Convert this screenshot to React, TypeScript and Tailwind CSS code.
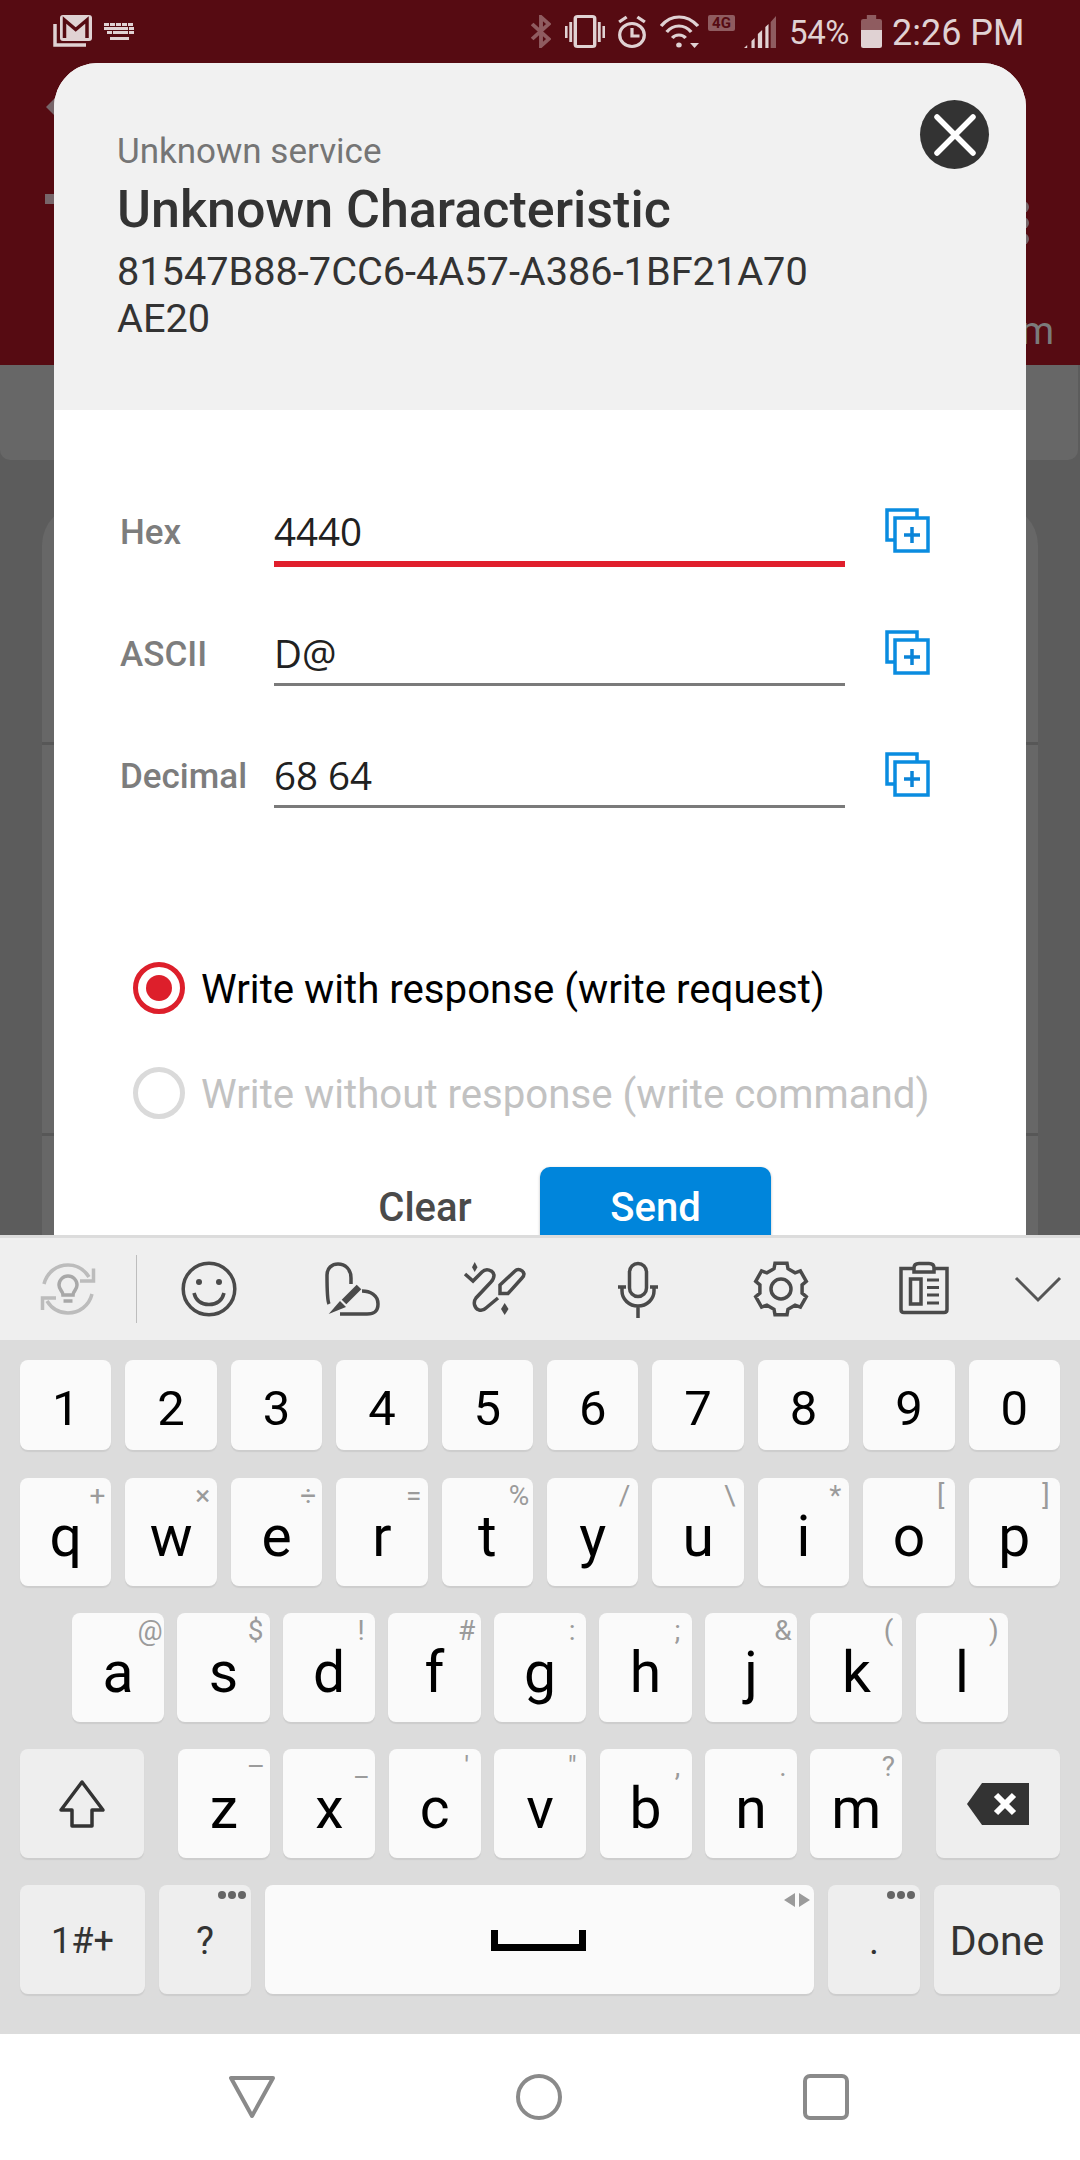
import React from "react";

const GEAR = (() => {
  const pts: string[] = [];
  for (let i = 0; i < 6; i++) {
    const c = -90 + i * 60;
    [[-19, 21.5], [-13, 26.5], [13, 26.5], [19, 21.5]].forEach(([d, r]) => {
      const a = ((c + d) * Math.PI) / 180;
      pts.push(`${(32 + r * Math.cos(a)).toFixed(1)},${(32 + r * Math.sin(a)).toFixed(1)}`);
    });
  }
  return pts.join(" ");
})();

function TI({ children, color = "#4a4a4a" }: { children: React.ReactNode; color?: string }) {
  return (
    <svg viewBox="0 0 64 64" width="64" height="64" fill="none" stroke={color} strokeWidth="3.5">
      {children}
    </svg>
  );
}

function Toolbar() {
  const Cell = ({ children }: { children: React.ReactNode }) => (
    <div className="w-[143px] flex items-center justify-center">{children}</div>
  );
  return (
    <div className="h-[102px] bg-[#efefef] flex items-center">
      <div className="w-[136px] flex items-center justify-center">
        <TI color="#bcbcbc">
          <path d="M8 27C11 15 21 8 32 8C41 8 48 12 53 20" />
          <path d="M44 24H57.5V11.5" />
          <path d="M56 37C53 49 43 56 32 56C23 56 16 52 11 44" />
          <path d="M20 41H6.5V53" />
          <path d="M27 38C27 34 23 33 23 28A9 9 0 0 1 41 28C41 33 37 34 37 38Z" stroke="#a8a8a8" />
          <path d="M27.5 44H36.5" stroke="#a8a8a8" />
        </TI>
      </div>
      <div className="w-px h-[68px] bg-[#bdbdbd]" />
      <Cell>
        <TI>
          <circle cx="32" cy="32" r="25.8" />
          <circle cx="22" cy="25" r="3" fill="#4a4a4a" stroke="none" />
          <circle cx="42" cy="25" r="3" fill="#4a4a4a" stroke="none" />
          <path d="M17 36C19 44 25 47.5 32 47.5S45 44 47 36" />
        </TI>
      </Cell>
      <Cell>
        <TI>
          <path d="M9 47C7 43 7 30 7 18C7 11 12 7 18 7C25 7 31 12 31 21V27" />
          <path d="M42 34C50 34 58 38 58 47S52 57 47 57H20" />
          <path d="M24 45L39 30" strokeWidth="6.5" />
          <path d="M8.7 57L20 44L26 50Z" fill="#4a4a4a" stroke="none" />
        </TI>
      </Cell>
      <Cell>
        <TI>
          <path d="M2 17L10 24L19 15C23 11 30 13 31 18C31 21 30 23 28 25L13 41C10 45 11 51 16 53C19 54 21 53 23 51L35 41" />
          <path d="M37 36.5V28L52 14C55 11 60 13 61 17C61 19 60 20 59 21L45 36.5Z" />
          <path d="M11.7 5L14.5 10.3L11.7 15L9 10.3Z" fill="#4a4a4a" stroke="none" />
          <path d="M41.7 46L45.5 52L41.7 58L38 52Z" fill="#4a4a4a" stroke="none" />
        </TI>
      </Cell>
      <Cell>
        <TI>
          <rect x="23.5" y="6.5" width="17" height="33" rx="8.5" />
          <path d="M12 30H20M44 30H52M16 30V34A16 15 0 0 0 48 34V30M32 49V61" />
        </TI>
      </Cell>
      <Cell>
        <TI>
          <polygon points={GEAR} />
          <circle cx="32" cy="32" r="10" />
        </TI>
      </Cell>
      <Cell>
        <TI>
          <path d="M21 11.5H9V52.5Q9 55.5 12 55.5H52Q55 55.5 55 52.5V11.5H43" />
          <path d="M22 15V11Q22 6.5 27 6.5H37Q42 6.5 42 11V15Z" />
          <rect x="18.5" y="22" width="10.5" height="25" />
          <path d="M35 23H47M35 30.5H47M35 38H47M35 46H47" strokeWidth="3" />
        </TI>
      </Cell>
      <div className="w-[85px] flex items-center justify-center">
        <svg width="48" height="28" viewBox="0 0 48 28" fill="none" stroke="#555" strokeWidth="3">
          <path d="M2 3L24 25L46 3" />
        </svg>
      </div>
    </div>
  );
}

function Key({
  label,
  hint,
  hintTop = "top-[4px]",
  cls,
  text = "text-[57px] pt-[9px]",
}: {
  label?: React.ReactNode;
  hint?: string;
  hintTop?: string;
  cls?: string;
  text?: string;
}) {
  return (
    <div
      className={`relative flex items-center justify-center rounded-[8px] shadow-[0_2px_1px_#cdcdcd] ${cls ?? "flex-1 bg-[#fafafa] text-black"} ${text}`}
    >
      <span className="leading-none">{label}</span>
      {hint && (
        <span className={`absolute right-0 w-[28px] text-center text-[28px] leading-[28px] text-[#9b9b9b] ${hintTop}`}>
          {hint}
        </span>
      )}
    </div>
  );
}

function Dots() {
  return (
    <span className="absolute top-[6px] right-[5px] flex gap-[2px]">
      <i className="block w-[8px] h-[8px] rounded-full bg-[#666]" />
      <i className="block w-[8px] h-[8px] rounded-full bg-[#666]" />
      <i className="block w-[8px] h-[8px] rounded-full bg-[#666]" />
    </span>
  );
}

function Keyboard() {
  const r2 = [["q", "+"], ["w", "×"], ["e", "÷"], ["r", "="], ["t", "%"], ["y", "/"], ["u", "\\"], ["i", "*"], ["o", "["], ["p", "]"]];
  const r3 = [["a", "@"], ["s", "$"], ["d", "!"], ["f", "#"], ["g", ":"], ["h", ";"], ["j", "&"], ["k", "("], ["l", ")"]];
  const r4 = [["z", "–"], ["x", "_"], ["c", "'"], ["v", '"'], ["b", ","], ["n", "."], ["m", "?"]];
  const keyW = "w-[92px] bg-[#fafafa] text-black";
  return (
    <div className="h-[799px] bg-[#dcdcdc] border-t-[3px] border-[#dcdcdc] flex flex-col">
      <Toolbar />
      <div className="flex-1 flex flex-col px-[20px] pt-[20px]">
        <div className="h-[90px] flex gap-[14px]">
          {"1234567890".split("").map((d) => (
            <Key key={d} label={d} text="text-[49px] pt-[6px]" />
          ))}
        </div>
        <div className="h-[108px] mt-[28px] flex gap-[14px]">
          {r2.map(([l, h]) => (
            <Key key={l} label={l} hint={h} />
          ))}
        </div>
        <div className="h-[109px] mt-[27px] flex gap-[13.4px] px-[52px]">
          {r3.map(([l, h]) => (
            <Key key={l} label={l} hint={h} />
          ))}
        </div>
        <div className="h-[109px] mt-[27px] flex">
          <Key
            cls="w-[124px] bg-[#eeeeee]"
            text="mr-[34px]"
            label={
              <svg width="48" height="50" viewBox="0 0 48 50" fill="none" stroke="#333" strokeWidth="3.5" className="block">
                <path d="M24 3L45 31H34V47H14V31H3Z" strokeLinejoin="round" />
              </svg>
            }
          />
          <div className="flex gap-[13.4px]">
            {r4.map(([l, h]) => (
              <Key key={l} label={l} hint={h} cls={keyW} />
            ))}
          </div>
          <Key
            cls="w-[124px] ml-auto bg-[#eeeeee]"
            text=""
            label={
              <svg width="62" height="42" viewBox="0 0 62 42" className="block">
                <path d="M0 21L15 0H62V42H15Z" fill="#333" />
                <path d="M29 12L47 30M47 12L29 30" stroke="#fff" strokeWidth="6" />
              </svg>
            }
          />
        </div>
        <div className="h-[109px] mt-[27px] flex">
          <Key cls="w-[125px] bg-[#eeeeee] text-[#333]" text="text-[36px] pt-[3px]" label="1#+" />
          <div className="relative ml-[14px]">
            <Key cls="w-[92px] h-full bg-[#eeeeee] text-[#333]" text="text-[38px] pt-[3px]" label="?" />
            <Dots />
          </div>
          <div className="relative ml-[14px] w-[549px] rounded-[8px] bg-[#fafafa] shadow-[0_2px_1px_#cdcdcd] flex items-center justify-center">
            <div className="w-[95px] h-[21px] border-x-[7px] border-b-[7px] border-black -ml-[3px] mt-[2px]" />
            <svg width="28" height="14" viewBox="0 0 28 14" className="absolute top-[8px] right-[3px]">
              <path d="M12 0V14L1 7Z M16 0V14L27 7Z" fill="#9b9b9b" />
            </svg>
          </div>
          <div className="relative ml-[14px]">
            <Key cls="w-[92px] h-full bg-[#eeeeee] text-[#333]" text="text-[38px] pt-[3px]" label="." />
            <Dots />
          </div>
          <Key cls="w-[126px] ml-[14px] bg-[#eeeeee] text-[#333]" text="text-[41px] pt-[4px]" label="Done" />
        </div>
      </div>
    </div>
  );
}

function Nav() {
  return (
    <div className="h-[126px] bg-white flex items-center">
      <svg width="48" height="44" viewBox="0 0 48 44" fill="none" stroke="#8a8a8a" strokeWidth="4" strokeLinejoin="round" className="ml-[228px]">
        <path d="M3 3H45L24 41Z" />
      </svg>
      <svg width="48" height="48" viewBox="0 0 48 48" fill="none" stroke="#8a8a8a" strokeWidth="4" className="ml-[239px]">
        <circle cx="24" cy="24" r="21" />
      </svg>
      <svg width="48" height="48" viewBox="0 0 48 48" fill="none" stroke="#8a8a8a" strokeWidth="4" className="ml-[239px]">
        <rect x="3" y="3" width="42" height="42" rx="5" />
      </svg>
    </div>
  );
}

const SB = "#e0d2d3";
const SBD = "#8f5c60";

function StatusBar() {
  const kb = [
    [24, [0, 6, 12, 18, 24]],
    [28, [0, 4, 9, 14, 19, 25]],
    [32, [3, 9, 14, 19, 25]],
  ] as [number, number[]][];
  return (
    <div className="h-[63px] flex items-center relative">
      <svg width="39" height="33" viewBox="0 0 39 33" className="ml-[53px]">
        <path d="M2 9V30H33" fill="none" stroke={SB} strokeWidth="3.5" />
        <rect x="7" y="0" width="32" height="26" rx="3" fill={SB} />
        <path d="M11.5 23V5L22.7 14.5L34 5V23" fill="none" stroke="#560b12" strokeWidth="3.5" />
      </svg>
      <svg width="32" height="17" viewBox="104 23 32 17" className="ml-[12px]">
        {kb.map(([y, xs]) =>
          xs.map((x) => <rect key={`${y}-${x}`} x={104 + x} y={y - 1} width="5" height="3" fill={SB} />)
        )}
        <rect x="110" y="37" width="19" height="3" fill={SB} />
      </svg>
      <div className="ml-auto mr-[54px] flex items-center">
        <svg width="20" height="33" viewBox="0 0 18 33" preserveAspectRatio="none" fill="none" stroke={SBD} strokeWidth="3.5">
          <path d="M1 9L16 24L9 31V2L16 9L1 24" />
        </svg>
        <svg width="40" height="33" viewBox="0 0 35 33" preserveAspectRatio="none" fill="none" stroke={SB} strokeWidth="2.5" className="ml-[14px]">
          <rect x="9" y="1.5" width="17" height="30" rx="2" strokeWidth="3" />
          <path d="M1 11V23M5 7V27M30 7V27M34 11V23" />
        </svg>
        <svg width="30" height="33" viewBox="0 0 28 33" preserveAspectRatio="none" fill="none" stroke={SB} strokeWidth="3" className="ml-[12px]">
          <circle cx="14" cy="20" r="11.5" />
          <path d="M14 13V21H21M2 7L9 2M26 7L19 2" />
        </svg>
        <svg width="39" height="33" viewBox="0 0 35 33" preserveAspectRatio="none" fill="none" stroke={SB} strokeWidth="3" className="ml-[13px]">
          <path d="M1 11C10 -1 24 -1 34 11" />
          <path d="M6 17C12 9 22 9 28 17" />
          <path d="M11 23C14 19 20 19 23 23" />
          <circle cx="17" cy="30" r="2.5" fill={SB} stroke="none" />
          <path d="M27 28H35L31 33Z" fill={SB} stroke="none" />
        </svg>
        <span className="ml-[9px] -mt-[17px] w-[27px] h-[16px] rounded-[2px] bg-[#8f5c60] text-[#560b12] text-[15px] leading-[16px] font-bold text-center">
          4G
        </span>
        <svg width="32" height="32" viewBox="0 0 30 32" preserveAspectRatio="none" className="ml-[9px]">
          <path d="M0 32L3 29V32Z M7 32V25L10 22V32Z M13 32V18L17 14V32Z M20 32V11L23 8V32Z" fill={SB} />
          <path d="M25 6L30 0V32H25Z" fill={SBD} />
        </svg>
        <span className="ml-[13px] w-[59px] pt-[2px] text-[33px] leading-none tracking-[-0.4px] text-[#e0d2d3] whitespace-nowrap">54%</span>
        <svg width="21" height="33" viewBox="0 0 18 33" preserveAspectRatio="none" className="ml-[13px]">
          <path d="M5 0H13V4H16Q18 4 18 6V15H0V6Q0 4 2 4H5Z" fill={SBD} />
          <path d="M0 15H18V31Q18 33 16 33H2Q0 33 0 31Z" fill={SB} />
        </svg>
        <span className="ml-[10px] w-[134px] pt-[3px] text-[36px] leading-none text-[#e0d2d3] whitespace-nowrap">2:26 PM</span>
      </div>
    </div>
  );
}

function Field({ label, value, line }: { label: string; value: string; line: string }) {
  return (
    <div className="h-[122px] flex items-start pl-[66px]">
      <div className="w-[154px] h-[47px] mt-[1px] text-[35px] leading-[47px] font-medium text-[#7d7d7d]">{label}</div>
      <div className={`w-[571px] h-[53px] box-content ${line}`}>
        <div className="text-[38.5px] leading-[46px] text-[#212121] [font-family:'Open_Sans',sans-serif]">{value}</div>
      </div>
      <svg width="45" height="45" viewBox="0 0 45 45" className="ml-[40px] block" fill="none" stroke="#0a8ce0" strokeWidth="3.5">
        <path d="M10 32H2V2H32V10" />
        <rect x="10" y="10" width="33" height="33" />
        <path d="M27 19V35M19 27H35" stroke="#0a84d8" strokeWidth="3.5" />
      </svg>
    </div>
  );
}

function Radio({ label, on }: { label: string; on?: boolean }) {
  return (
    <div className="h-[52px] flex items-center pl-[79px]">
      <div className={`w-[52px] h-[52px] rounded-full border-[5px] flex items-center justify-center ${on ? "border-[#dd1f2b]" : "border-[#dadada]"}`}>
        {on && <div className="w-[26px] h-[26px] rounded-full bg-[#dd1f2b]" />}
      </div>
      <span className={`ml-[16px] pt-[5px] text-[40.2px] leading-none whitespace-nowrap ${on ? "text-black" : "text-[#c2c2c2]"}`}>{label}</span>
    </div>
  );
}

function Modal() {
  return (
    <div className="absolute left-[54px] top-[63px] w-[972px] h-[1300px] bg-white rounded-t-[44px] overflow-hidden">
      <div className="relative h-[347px] bg-[#f1f1f1] pl-[63px] pt-[69px]">
        <div className="text-[35px] leading-[40px] text-[#757575]">Unknown service</div>
        <div className="text-[52px] leading-[60px] mt-[8px] font-medium text-[#333]">Unknown Characteristic</div>
        <div className="text-[39.7px] leading-[47px] mt-[8px] text-[#333] w-[720px] break-all">
          81547B88-7CC6-4A57-A386-1BF21A70 AE20
        </div>
        <div className="absolute left-[866px] top-[37px] w-[69px] h-[69px] rounded-full bg-[#333] flex items-center justify-center">
          <svg width="42" height="42" viewBox="0 0 42 42" stroke="#fff" strokeWidth="5.5" strokeLinecap="round">
            <path d="M3 3L39 39M39 3L3 39" />
          </svg>
        </div>
      </div>
      <div className="pt-[98px]">
        <Field label="Hex" value="4440" line="border-b-[6px] border-[#e01f2c]" />
        <Field label="ASCII" value="D@" line="border-b-[3px] border-[#7a7a7a]" />
        <Field label="Decimal" value="68 64" line="border-b-[3px] border-[#7a7a7a]" />
      </div>
      <div className="mt-[88px] flex flex-col gap-[53px]">
        <Radio on label="Write with response (write request)" />
        <Radio label="Write without response (write command)" />
      </div>
      <div className="mt-[48px] flex ml-[271px]">
        <div className="w-[200px] mr-[15px] h-[82px] flex items-center justify-center text-[40px] font-medium text-[#4a4a4a]">Clear</div>
        <div className="w-[231px] h-[82px] rounded-[10px] bg-[#0085db] flex items-center justify-center text-[40px] font-medium text-white shadow-[0_1px_3px_#bbb]">
          Send
        </div>
      </div>
    </div>
  );
}

export default function App() {
  return (
    <div className="w-[1080px] h-[2160px] overflow-hidden flex flex-col [font-family:Roboto,sans-serif]">
      <div className="relative h-[1235px] shrink-0 overflow-hidden bg-[#5c5c5c]">
        <div className="relative h-[365px] bg-[#560b12]">
          <StatusBar />
          <svg width="20" height="34" viewBox="0 0 20 34" className="absolute left-[44px] top-[90px]">
            <path d="M2 17L18 1V33Z" fill="#77666a" />
          </svg>
          <div className="absolute left-[45px] top-[194px] w-[12px] h-[10px] bg-[#77666a]" />
          <div className="absolute left-[1017px] top-[201px] flex flex-col gap-[4px]">
            <i className="block w-[12px] h-[12px] rounded-full bg-[#77666a]" />
            <i className="block w-[12px] h-[12px] rounded-full bg-[#77666a]" />
            <i className="block w-[12px] h-[12px] rounded-full bg-[#77666a]" />
          </div>
          <div className="absolute right-[26px] top-[308px] text-[38px] leading-[46px] text-[#7b7b7b]">com</div>
        </div>
        <div className="h-[95px] mr-[2px] bg-[#676767] rounded-b-[10px]" />
        <div className="mt-[45px] mx-[42px] h-[800px] rounded-t-[40px] bg-[#676767] flex flex-col">
          <div className="h-[237px] border-b-[3px] border-[#575757] box-content" />
          <div className="h-[388px] border-b-[3px] border-[#575757] box-content" />
        </div>
        <Modal />
      </div>
      <Keyboard />
      <Nav />
    </div>
  );
}
